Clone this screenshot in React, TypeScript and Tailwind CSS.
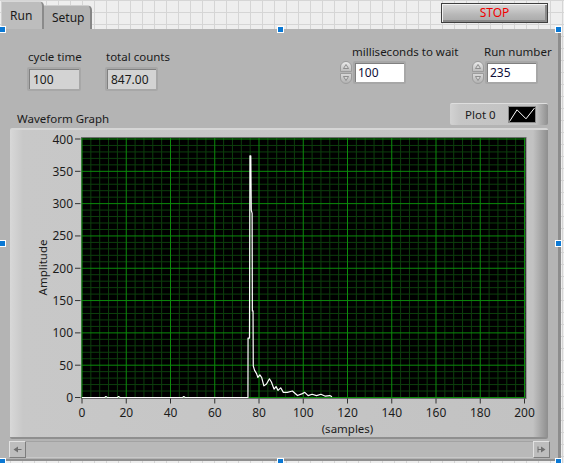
import React from "react";

const X0 = 72;
const X1 = 514.5;
const YB = 269.5;
const YT = 11;
const px = (n: number) => X0 + (n / 200) * (X1 - X0);
const py = (v: number) => YB - (v / 400) * (YB - YT);

// samples read off the trace
const trace: [number, number][] = [
  [0, 0], [10.3, 0], [10.8, 1.5], [11.5, 0], [16, 0], [16.5, 1.5], [17.2, 0],
  [45.5, 0], [46, 1.5], [46.6, 0], [75, 0], [75.05, 92], [75.7, 92], [75.9, 374],
  [76.3, 374], [76.5, 290], [76.9, 285], [77.0, 134], [77.3, 134], [77.4, 49],
  [78, 42], [78.9, 37], [79.5, 31], [80.4, 35], [81.2, 31], [82.2, 18], [83.4, 21],
  [84.7, 29], [85.6, 24], [86.8, 13], [87.7, 17], [88.6, 11], [89.8, 15], [91, 8],
  [92.8, 8], [95.1, 10], [97.4, 3], [99.6, 6], [100.7, 8], [102.2, 3], [104, 5],
  [106, 3], [108, 5], [110, 2], [112, 3], [113, 1],
];

function Handle({ className }: { className: string }) {
  return <div className={`absolute h-[7px] w-[7px] border border-white bg-[#0a78d4] ${className}`} />;
}

function Spinner() {
  return (
    <div className="flex w-[12px] flex-col gap-px">
      <div className="flex h-[11px] items-center justify-center rounded-t-[6px] border border-[#9c9c9c] bg-[linear-gradient(#ececec,#bdbdbd)]">
        <svg width="6" height="5" viewBox="0 0 6 5">
          <path d="M3 0.5 L5.5 4.5 H0.5 Z" fill="#d8d8d8" stroke="#7c7c7c" strokeWidth="0.8" />
        </svg>
      </div>
      <div className="flex h-[11px] items-center justify-center rounded-b-[6px] border border-[#9c9c9c] bg-[linear-gradient(#d8d8d8,#b2b2b2)]">
        <svg width="6" height="5" viewBox="0 0 6 5">
          <path d="M3 4.5 L5.5 0.5 H0.5 Z" fill="#d8d8d8" stroke="#7c7c7c" strokeWidth="0.8" />
        </svg>
      </div>
    </div>
  );
}

function Indicator({ label, value, w }: { label: string; value: string; w: string }) {
  return (
    <div className={`mt-[20px] ${w}`}>
      <div className="h-[16px] pl-px leading-[16px] whitespace-nowrap">{label}</div>
      <div className="mt-[2px] h-[24px] rounded-[2px] bg-[#a7a7a7] p-[2px]">
        <div className="flex h-full items-center border-t border-l border-[#808080] bg-[#d3d3d3] pl-[3px] text-[12px]">
          {value}
        </div>
      </div>
    </div>
  );
}

function Control({ label, value }: { label: string; value: string }) {
  return (
    <div className="mt-[15px]">
      <div className="h-[16px] pl-[12px] leading-[16px] whitespace-nowrap">{label}</div>
      <div className="mt-px flex items-start gap-px">
        <Spinner />
        <div className="h-[23px] w-[53px] rounded-[2px] bg-[#a7a7a7] p-[2px]">
          <div className="flex h-full items-center border-t border-l border-[#808080] bg-white pl-[2px] text-[12px] text-[#10103a]">
            {value}
          </div>
        </div>
      </div>
    </div>
  );
}

function Chart() {
  const minorX = Array.from({ length: 51 }, (_, k) => k * 4).filter((n) => n % 20 !== 0);
  const majorX = Array.from({ length: 11 }, (_, k) => k * 20);
  const minorY = Array.from({ length: 41 }, (_, k) => k * 10).filter((v) => v % 50 !== 0);
  const majorY = Array.from({ length: 9 }, (_, k) => k * 50);
  const pts = trace.map(([n, v]) => `${px(n).toFixed(2)},${py(v).toFixed(2)}`).join(" ");

  return (
    <svg width="538" height="311" viewBox="0 0 538 311" className="block">
      <rect x="71.5" y="9.5" width="444.5" height="261" fill="#000" stroke="#6e6e6e" />
      {minorX.map((n) => (
        <line key={`mx${n}`} x1={px(n)} x2={px(n)} y1={10} y2={270} stroke="#0d3f0d" strokeWidth="1" />
      ))}
      {minorY.map((v) => (
        <line key={`my${v}`} x1={72} x2={515.5} y1={py(v)} y2={py(v)} stroke="#0d3f0d" strokeWidth="1" />
      ))}
      {majorX.map((n) => (
        <line key={`Mx${n}`} x1={px(n)} x2={px(n)} y1={10} y2={270} stroke="#0b8c0b" strokeWidth="1" />
      ))}
      {majorY.map((v) => (
        <line key={`My${v}`} x1={72} x2={515.5} y1={py(v)} y2={py(v)} stroke="#0b8c0b" strokeWidth="1" />
      ))}
      <polyline points={pts} fill="none" stroke="#fff" strokeWidth="1.2" strokeLinejoin="round" />

      {majorY.map((v) => (
        <g key={`ty${v}`}>
          <line x1={65} x2={70.5} y1={py(v)} y2={py(v)} stroke="#333" />
          <text x={63} y={py(v) + 4.5} textAnchor="end" fontSize="12" fill="#1c1c1c">
            {v}
          </text>
        </g>
      ))}
      {majorX.map((n) => (
        <g key={`tx${n}`}>
          <line x1={px(n)} x2={px(n)} y1={270.5} y2={275.5} stroke="#333" />
          <text x={px(n)} y={289} textAnchor="middle" fontSize="12" fill="#1c1c1c">
            {n}
          </text>
        </g>
      ))}
      <text x={37} y={139.5} transform="rotate(-90 37 139.5)" textAnchor="middle" fontSize="11.5" fill="#1c1c1c">
        Amplitude
      </text>
      <text x={337.5} y={305} textAnchor="middle" fontSize="11.5" fill="#1c1c1c">
        (samples)
      </text>
    </svg>
  );
}

function ScrollButton({ dir }: { dir: "left" | "right" }) {
  return (
    <div className="flex h-[17px] w-[17px] items-center justify-center border border-t-[#e2e2e2] border-l-[#e2e2e2] border-r-[#7d7d7d] border-b-[#7d7d7d] bg-[#bdbdbd]">
      <svg width="9" height="7" viewBox="0 0 9 7">
        {dir === "left" ? (
          <path d="M0.5 3.5 L5 0.5 V6.5 Z M5 3 H8.5 V4 H5 Z" fill="#6f6f6f" />
        ) : (
          <path d="M8.5 3.5 L4 0.5 V6.5 Z M0.5 0.5 H1.5 V6.5 H0.5 Z M1.5 3 H4 V4 H1.5 Z" fill="#6f6f6f" />
        )}
      </svg>
    </div>
  );
}

export default function App() {
  return (
    <div className="relative h-[463px] w-[564px] overflow-hidden bg-[#eeeeee] bg-[linear-gradient(#d5d5d5_1px,transparent_1px),linear-gradient(90deg,#d5d5d5_1px,transparent_1px)] bg-[size:12px_12px] bg-[position:10px_0px] font-['Noto_Sans',sans-serif] text-[11.5px] text-[#1a1a1a]">
      {/* tab strip + stop button */}
      <div className="flex h-[29px] items-end">
        <div className="ml-px flex h-[28px] w-[43px] items-start rounded-tr-[5px] border-t border-r-2 border-l border-t-[#d8d8d8] border-r-[#8a8a8a] border-l-[#d0d0d0] bg-[#bdbdbd] pt-[5px] pl-[8px] text-[12px]">
          Run
        </div>
        <div className="flex h-[24px] w-[48px] items-start rounded-tr-[5px] border-t border-r-2 border-t-[#cfcfcf] border-r-[#858585] bg-[#b4b4b4] pt-[3px] pl-[8px] text-[12px]">
          Setup
        </div>
        <div className="mt-[3px] mr-[16px] ml-auto flex h-[20px] w-[107px] items-center justify-center self-start border border-[#3f3f3f] bg-[linear-gradient(#d9d9d9,#b7b7b7_60%,#a9a9a9)] text-[12px] text-[#f00000] shadow-[inset_1px_1px_0_#f2f2f2,inset_-2px_-2px_0_#8a8a8a]">
          STOP
        </div>
      </div>

      {/* tab body */}
      <div className="flex h-[432px] w-[561px] flex-col border-r-[3px] border-b-2 border-r-[#8c8c8c] border-b-[#8f8f8f] bg-[#b4b4b4]">
        <div className="flex h-[72px] items-start">
          <div className="ml-[27px]">
            <Indicator label="cycle time" value="100" w="w-[54px]" />
          </div>
          <div className="ml-[24px]">
            <Indicator label="total counts" value="847.00" w="w-[53px]" />
          </div>
          <div className="ml-[182px] w-[118px]">
            <Control label="milliseconds to wait" value="100" />
          </div>
          <div className="ml-[14px]">
            <Control label="Run number" value="235" />
          </div>
        </div>

        <div className="flex h-[27px] items-start">
          <div className="mt-[10px] ml-[17px] leading-[16px]">Waveform Graph</div>
          <div className="mt-[2px] mr-[10px] ml-auto flex h-[22px] w-[98px] items-center rounded-[2px] border-t border-t-[#dedede] bg-[linear-gradient(90deg,#d2d2d2,#c6c6c6_10px,#c2c2c2_calc(100%_-_12px),#8f8f8f)] pl-[15px]">
            <span>Plot 0</span>
            <svg width="28" height="17" viewBox="0 0 28 17" className="ml-[12px]">
              <rect x="0.5" y="0.5" width="27" height="16" fill="#000" stroke="#8a8a8a" />
              <polyline points="1.5,15.5 9,3.8 18,12.8 26.5,2" fill="none" stroke="#fff" strokeWidth="1" />
            </svg>
          </div>
        </div>

        <div className="ml-[10px] h-[311px] w-[538px] rounded-[2px] border-t-2 border-b-2 border-t-[#d6d6d6] border-b-[#8f8f8f] bg-[linear-gradient(90deg,#d8d8d8,#c8c8c8_13px,#c2c2c2_calc(100%_-_15px),#8e8e8e)]">
          <div className="-mt-[2px]">
            <Chart />
          </div>
        </div>

        <div className="mt-[2px] ml-[9px] flex h-[17px] w-[541px]">
          <ScrollButton dir="left" />
          <div className="flex-1 border-t border-b border-t-[#a3a3a3] border-b-[#c8c8c8] bg-[#b9b9b9]" />
          <ScrollButton dir="right" />
        </div>
      </div>

      <Handle className="top-[26px] left-[-1px]" />
      <Handle className="top-[26px] left-[277px]" />
      <Handle className="top-[26px] left-[555px]" />
      <Handle className="top-[240px] left-[-1px]" />
      <Handle className="top-[240px] left-[555px]" />
      <Handle className="top-[458px] left-[-1px]" />
      <Handle className="top-[458px] left-[277px]" />
      <Handle className="top-[458px] left-[555px]" />
    </div>
  );
}
